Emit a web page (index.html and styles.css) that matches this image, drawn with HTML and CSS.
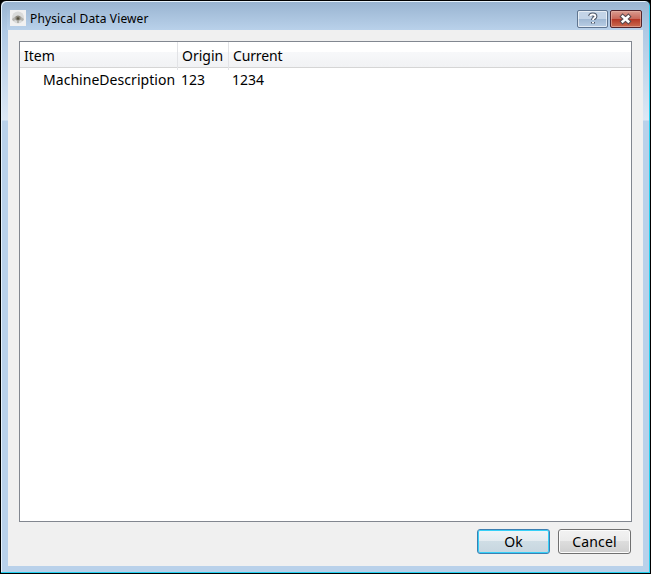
FILE: index.html
```html
<!DOCTYPE html>
<html lang="en">
<head>
<meta charset="utf-8">
<title>Physical Data Viewer</title>
<link rel="stylesheet" href="styles.css">
</head>
<body>
<div class="window">
  <header class="titlebar">
    <svg class="app-icon" width="16" height="16" viewBox="0 0 16 16">
      <path fill="#f1f1f1" d="M0 0h16v16H0z"/>
      <circle cx="8" cy="7.5" r="6" fill="#d9dad9"/>
      <path d="M2 9l4-3h4l4 3-1 2-3-1-2 1-2-1-3 1z" fill="#b4b3af"/>
      <circle cx="8" cy="8" r="2.6" fill="#8c887c"/>
      <circle cx="8" cy="8.5" r="1.3" fill="#55503f"/>
      <path d="M8 10v3" stroke="#a5a49e" stroke-width="1.5"/>
    </svg>
    <h1 class="title">Physical Data Viewer</h1>
    <button class="caption help" aria-label="Help">
      <svg width="29" height="16" viewBox="0 0 29 16"><path d="M12.2 5.2C12.4 2.9 17.4 2.9 17.4 5.4C17.4 7.2 15 7 15 9M15 10.9v1.6" fill="none" stroke="#4c5666" stroke-width="4"/><path d="M12.2 5.2C12.4 2.9 17.4 2.9 17.4 5.4C17.4 7.2 15 7 15 9M15 10.9v1.3" fill="none" stroke="#fff" stroke-width="1.9"/></svg>
    </button>
    <button class="caption close" aria-label="Close">
      <svg width="29" height="16" viewBox="0 0 29 16"><path d="M11.7 5.5l5.6 5M17.3 5.5l-5.6 5" stroke="#594b50" stroke-width="4.6" stroke-linecap="square"/><path d="M11.7 5.5l5.6 5M17.3 5.5l-5.6 5" stroke="#fff" stroke-width="2.5" stroke-linecap="square"/></svg>
    </button>
  </header>
  <main class="client">
    <section class="tree">
      <div class="row head"><span>Item</span><span>Origin</span><span>Current</span></div>
      <div class="row"><span class="name">MachineDescription</span><span>123</span><span>1234</span></div>
    </section>
    <footer class="actions">
      <button class="button default">Ok</button>
      <button class="button">Cancel</button>
    </footer>
  </main>
</div>
</body>
</html>
```
FILE: styles.css
```css
* { box-sizing: border-box; }
body { margin: 0; background: #000; overflow: hidden; }
button { padding: 0; margin: 0; }
.window {
  width: 651px; height: 574px;
  display: flex; flex-direction: column;
  padding: 0 7px 7px 6px;
  border: 1px solid #000;
  border-radius: 6px 6px 0 0;
  box-shadow: inset -1px -1px #25d0f0, inset 1px 1px #e6f2fc;
  background: linear-gradient(#99b4d1, #b0c9e4 30px, #dce8f5 119px, #b9d1ea 120px);
}
.titlebar {
  flex: none; height: 28px;
  display: flex; align-items: flex-start;
  margin: 1px 0 0; padding: 0 1px 0 3px;
  background: linear-gradient(#99b4d1, #b9d1ea);
}
.app-icon { margin-top: 8px; }
.title {
  margin: 8px auto 0 4px;
  font: 400 12px/18px "Noto Sans", sans-serif;
  letter-spacing: .13px; color: #000; white-space: nowrap;
}
.caption {
  display: block; width: 31px; height: 18px; margin-top: 8px;
  border: 1px solid #5f7590; border-radius: 2px;
  box-shadow: inset 0 0 0 1px #ffffff99;
}
.caption svg { display: block; }
.help { margin-right: 2px; background: linear-gradient(#c3d4e7 50%, #9fb8d3 50%, #b9cee5); }
.close { width: 32px; border-color: #53242b; background: linear-gradient(#d99c90 0, #c9695b 48%, #b43624 50%, #cb6b50); box-shadow: inset 0 0 0 1px #e9b5a899; }
.client {
  flex: 1; display: flex; flex-direction: column;
  margin-left: 1px; padding: 11px 11px 12px;
  background: #f0f0f0;
}
.tree {
  flex: none; height: 481px; border: 1px solid #828790; background: #fff;
}
.row {
  display: grid; grid-template-columns: 158px 51px 1fr;
  height: 25px; line-height: 24px;
  font-family: "Noto Sans", sans-serif; font-size: 14px; color: #000;
  white-space: nowrap;
}
.row span { padding-left: 3px; }
.row .name { padding-left: 23px; letter-spacing: .04px; }
.head { height: 26px; line-height: 28px; background: linear-gradient(#fff 40%, #f7f8fa 41%, #f1f2f4); border-bottom: 1px solid #d5d5d5; }
.head span { padding-left: 4px; border-right: 1px solid #e2e3e6; }
.head span:last-child { border: 0; letter-spacing: -.15px; }
.actions { display: flex; justify-content: flex-end; gap: 8px; margin: 7px 1px 0 0; }
.button {
  width: 73px; height: 25px;
  border: 1px solid #707070; border-radius: 3px;
  background: linear-gradient(#f2f2f2, #ebebeb 50%, #dddddd 50%, #cfcfcf);
  box-shadow: inset 0 0 0 1px #fcfcfc;
  font: 14px/23px "Noto Sans", sans-serif; letter-spacing: .15px; color: #000;
}
.default {
  border-color: #3c7fb1;
  background: linear-gradient(#eff4f7, #e3ebf0 50%, #cfdde5 50%, #c7d6df);
  box-shadow: inset 0 0 0 1px #36d0f8;
}
```
